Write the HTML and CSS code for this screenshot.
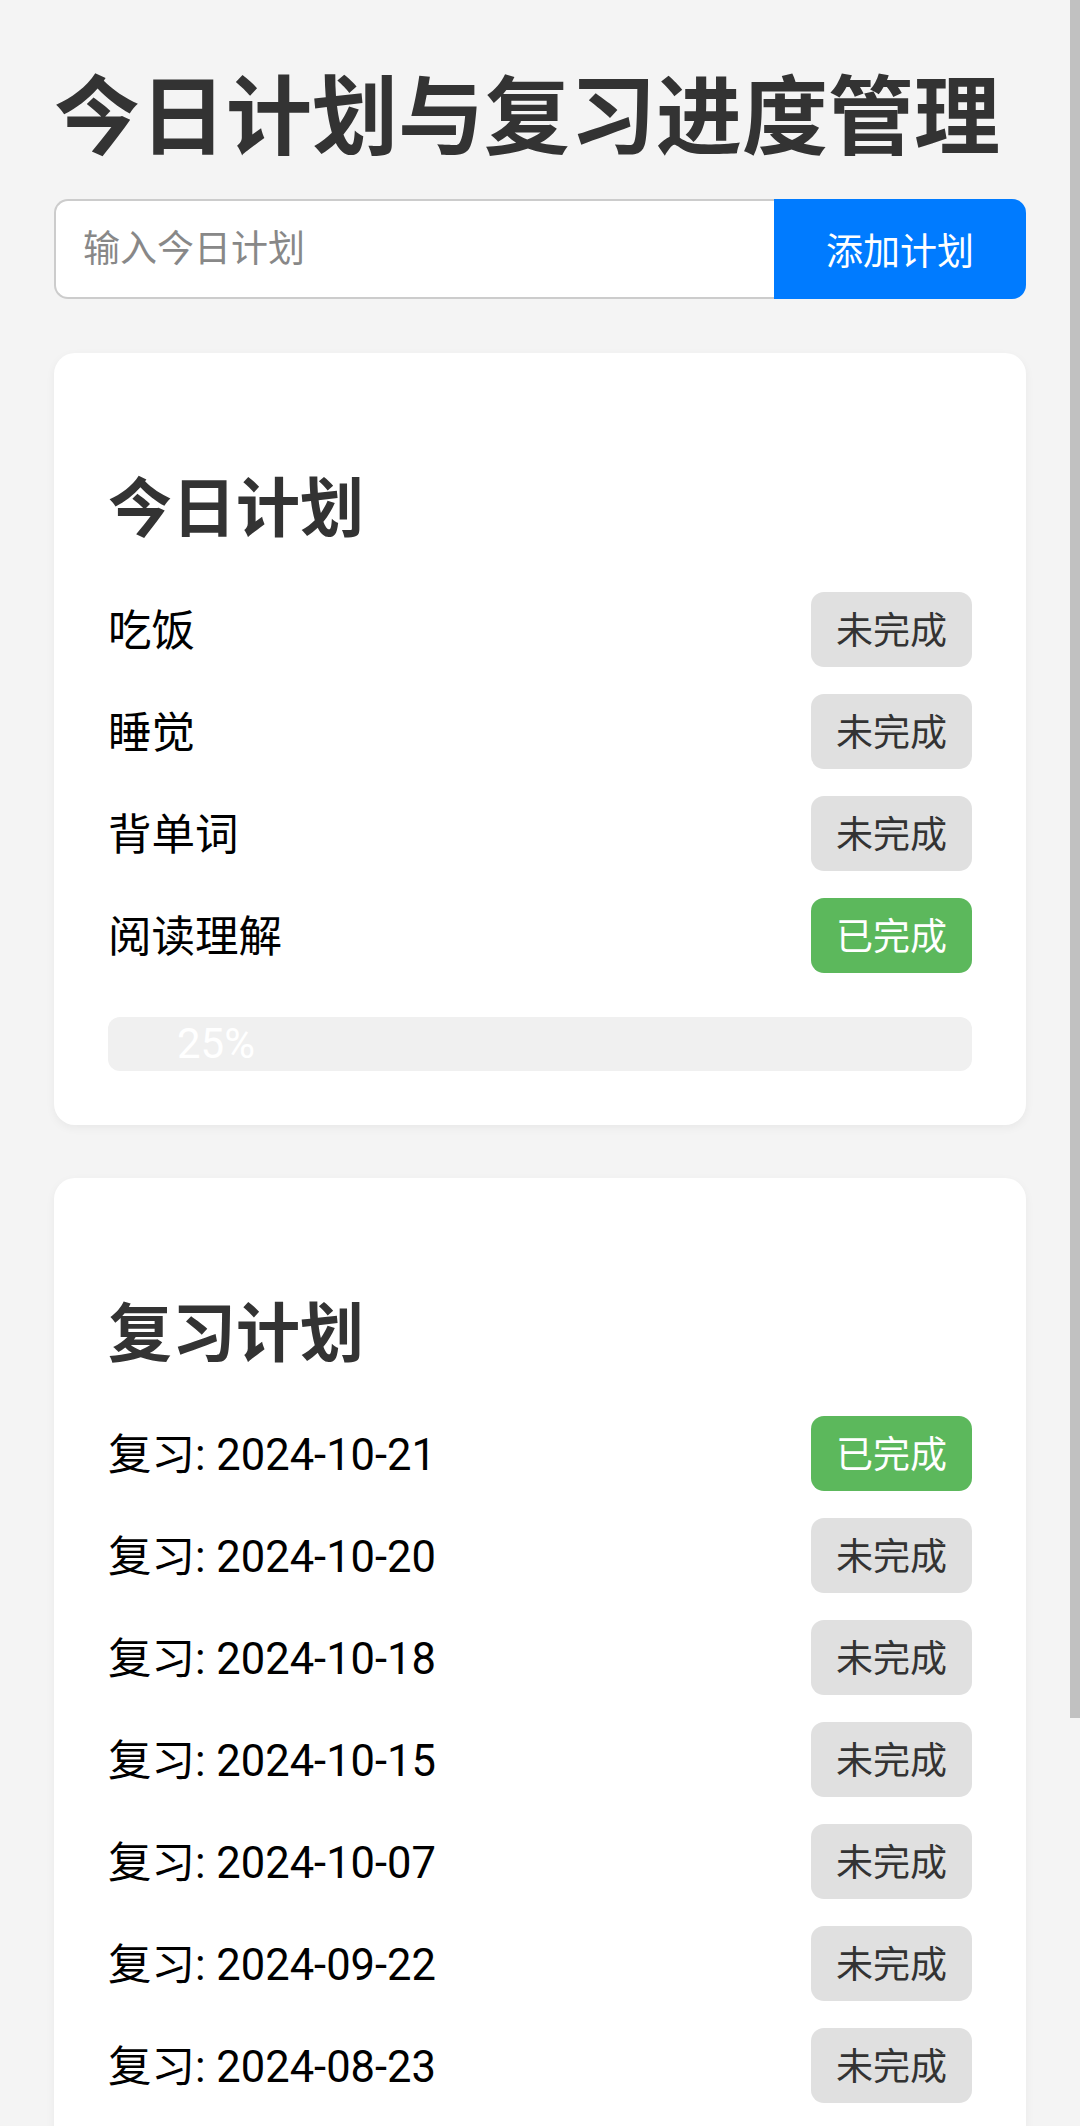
FILE: index.html
```html
<!DOCTYPE html>
<html lang="zh-CN">
<head>
<meta charset="utf-8">
<title>今日计划与复习进度管理</title>
<link rel="stylesheet" href="styles.css">
</head>
<body>
<div class="page">
  <h1 class="title">今日计划与复习进度管理</h1>
  <div class="add-row">
    <input class="plan-input" type="text" placeholder="输入今日计划">
    <button class="add-btn">添加计划</button>
  </div>

  <section class="card">
    <h2 class="card-title">今日计划</h2>
    <ul class="list">
      <li class="item"><span class="item-text">吃饭</span><button class="status">未完成</button></li>
      <li class="item"><span class="item-text">睡觉</span><button class="status">未完成</button></li>
      <li class="item"><span class="item-text">背单词</span><button class="status">未完成</button></li>
      <li class="item"><span class="item-text">阅读理解</span><button class="status done">已完成</button></li>
    </ul>
    <div class="progress"><div class="progress-fill" style="width:25%">25%</div></div>
  </section>

  <section class="card">
    <h2 class="card-title">复习计划</h2>
    <ul class="list">
      <li class="item"><span class="item-text">复习: 2024-10-21</span><button class="status done">已完成</button></li>
      <li class="item"><span class="item-text">复习: 2024-10-20</span><button class="status">未完成</button></li>
      <li class="item"><span class="item-text">复习: 2024-10-18</span><button class="status">未完成</button></li>
      <li class="item"><span class="item-text">复习: 2024-10-15</span><button class="status">未完成</button></li>
      <li class="item"><span class="item-text">复习: 2024-10-07</span><button class="status">未完成</button></li>
      <li class="item"><span class="item-text">复习: 2024-09-22</span><button class="status">未完成</button></li>
      <li class="item"><span class="item-text">复习: 2024-08-23</span><button class="status">未完成</button></li>
    </ul>
  </section>
</div>
<div class="scroll-thumb"></div>
</body>
</html>
```

FILE: styles.css
```css
html {
  overflow: hidden;
  background: #f4f4f4;
}

body {
  margin: 0;
  background: #f4f4f4;
  font-family: Roboto, "Noto Sans CJK SC", sans-serif;
  color: #000;
}

.page {
  padding: 0 54px;
}

.title {
  margin: 67px 0 29px;
  font-size: 86px;
  line-height: 103px;
  font-weight: 700;
  color: #333;
  white-space: nowrap;
}

.add-row {
  display: flex;
  height: 100px;
}

.plan-input {
  flex: 1;
  min-width: 0;
  box-sizing: border-box;
  height: 100px;
  margin: 0;
  padding: 0 27px;
  border: 2px solid #cccccc;
  border-right: none;
  border-radius: 14px 0 0 14px;
  background: #fff;
  font-family: Roboto, "Noto Sans CJK SC", sans-serif;
  font-size: 37px;
  color: #333;
  outline: none;
}

.plan-input::placeholder {
  color: #888;
}

.add-btn {
  width: 252px;
  height: 100px;
  margin: 0;
  padding: 0;
  border: none;
  border-radius: 0 14px 14px 0;
  background: #007bff;
  color: #fff;
  font-family: Roboto, "Noto Sans CJK SC", sans-serif;
  font-size: 37px;
}

.card {
  margin-top: 54px;
  padding: 54px;
  background: #fff;
  border-radius: 21px;
  box-shadow: 0 3px 10px rgba(0, 0, 0, 0.05);
}

.card + .card {
  margin-top: 53px;
}

.card-title {
  margin: 56px 0 22px;
  font-size: 64px;
  line-height: 93px;
  font-weight: 700;
  color: #333;
}

.list {
  list-style: none;
  margin: 0;
  padding: 0;
}

.item {
  display: flex;
  justify-content: space-between;
  align-items: center;
  padding: 13.5px 0;
}

.item-text {
  padding-top: 5px;
  font-size: 43.5px;
  line-height: 60px;
  color: #000;
}

.status {
  margin: 0;
  padding: 13px 25px 9px;
  border: none;
  border-radius: 13px;
  background: #e0e0e0;
  color: #333;
  font-family: Roboto, "Noto Sans CJK SC", sans-serif;
  font-size: 37px;
  line-height: 53px;
}

.status.done {
  background: #5cb85c;
  color: #fff;
}

.progress {
  margin-top: 30.5px;
  height: 54px;
  background: #f0f0f0;
  border-radius: 12px;
  overflow: hidden;
}

.progress-fill {
  height: 54px;
  text-align: center;
  color: #fff;
  font-size: 42px;
  line-height: 54px;
}

.scroll-thumb {
  position: fixed;
  top: 0;
  right: 0;
  width: 10px;
  height: 1718px;
  background: #c1c1c1;
}
```
